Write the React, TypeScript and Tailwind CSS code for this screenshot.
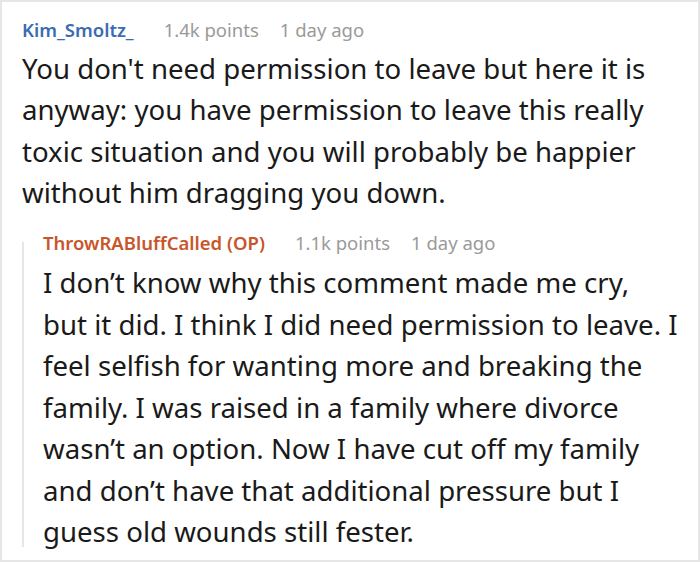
export default function App() {
  return (
    <div
      className="w-[700px] h-[562px] bg-white border-2 border-[#e6e6e6] overflow-hidden"
      style={{ fontFamily: '"Noto Sans", "Open Sans", sans-serif' }}
    >
      <div className="pl-[20px] pt-[14px] pr-[19px]">
        <div className="flex items-baseline text-[18.5px] leading-[28px]">
          <span className="font-semibold text-[#3a6cb4]">Kim_Smoltz_</span>
          <span className="ml-[30px] text-[#9a9a9a]">1.4k points</span>
          <span className="ml-[21px] text-[#9a9a9a]">1 day ago</span>
        </div>
        <p className="mt-[3.5px] text-[27.6px] leading-[41.5px] text-[#1a1a1a]">
          You don't need permission to leave but here it is anyway: you have permission to leave this really toxic
          situation and you will probably be happier without him dragging you down.
        </p>
      </div>
      <div className="relative ml-[20px] mt-[15px] mr-[19px] pl-[21px]">
        {/* thread line */}
        <div className="absolute left-0 top-[13px] bottom-[6px] w-[2px] bg-[#e6e6e6]" />
        <div className="flex items-baseline text-[18.5px] leading-[28px]">
          <span className="font-semibold text-[#c8562a]">ThrowRABluffCalled (OP)</span>
          <span className="ml-[30px] text-[#9a9a9a]">1.1k points</span>
          <span className="ml-[21px] text-[#9a9a9a]">1 day ago</span>
        </div>
        <p className="mt-[5.5px] text-[27.6px] leading-[41.5px] text-[#1a1a1a]">
          I don’t know why this comment made me cry, but it did. I think I did need permission to leave. I feel
          selfish for wanting more and breaking the family. I was raised in a family where divorce wasn’t an option.
          Now I have cut off my family and don’t have that additional pressure but I guess old wounds still fester.
        </p>
      </div>
    </div>
  )
}
